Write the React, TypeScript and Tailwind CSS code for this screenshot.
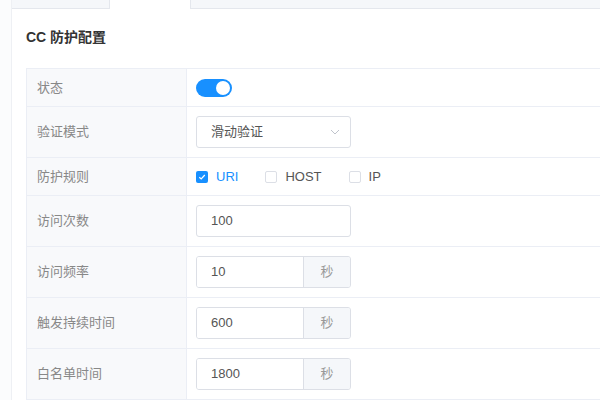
import React from "react";

const font = { fontFamily: '"Liberation Sans", "Noto Sans CJK SC", sans-serif' };

const Label = ({ children, tall }: { children: React.ReactNode; tall?: boolean }) => (
  <div
    className={`w-[160px] shrink-0 bg-[#f8f9fb] border-r border-[#ebeef5] flex items-center pl-[10px] text-[13px] text-[#888] ${
      tall ? "h-[50px]" : "h-[37px]"
    }`}
  >
    {children}
  </div>
);

const Row = ({ label, tall, children }: { label: string; tall?: boolean; children: React.ReactNode }) => (
  <div className="flex border-b border-[#ebeef5] shrink-0">
    <Label tall={tall}>{label}</Label>
    <div className="flex-1 flex items-center pl-[9px]">{children}</div>
  </div>
);

const Checkbox = ({ checked, label }: { checked?: boolean; label: string }) => (
  <div className="flex items-center mr-[27px]">
    {checked ? (
      <span className="w-[12px] h-[12px] rounded-[2px] bg-[#1890ff] flex items-center justify-center">
        <svg width="8" height="8" viewBox="0 0 8 8">
          <path d="M1.3 4.2 L3.2 6 L6.8 2" fill="none" stroke="white" strokeWidth="1.2" />
        </svg>
      </span>
    ) : (
      <span className="w-[12px] h-[12px] rounded-[2px] border border-[#dcdfe6] bg-white" />
    )}
    <span className={`ml-[8px] text-[13px] ${checked ? "text-[#1890ff]" : "text-[#555]"}`}>{label}</span>
  </div>
);

const UnitInput = ({ value }: { value: string }) => (
  <div className="flex w-[155px] h-[32px] border border-[#dcdfe6] rounded-[3px] overflow-hidden">
    <div className="w-[106px] flex items-center pl-[14px] text-[13px] text-[#555] bg-white">{value}</div>
    <div className="flex-1 border-l border-[#dcdfe6] bg-[#f5f7fa] flex items-center justify-center text-[13px] text-[#999]">
      秒
    </div>
  </div>
);

export default function App() {
  return (
    <div className="w-[600px] h-[400px] overflow-hidden flex bg-[#fbfcfd]" style={font}>
      <div className="w-[12px] shrink-0 border-r border-[#eef0f4]" />
      <div className="flex-1 bg-white flex flex-col">
        <div className="h-[9px] flex shrink-0">
          <div className="w-[98px] bg-[#f5f7fa] border-r border-b border-[#e4e7ed]" />
          <div className="w-[80px] bg-white" />
          <div className="flex-1 bg-[#f5f7fa] border-l border-b border-[#e4e7ed]" />
        </div>
        <div className="shrink-0 pl-[14px] pt-[18px] text-[14px] font-bold text-[#333] h-[59px]">CC 防护配置</div>
        <div className="shrink-0 ml-[14px] border-t border-l border-[#ebeef5]">
          <Row label="状态">
            <div className="w-[36px] h-[18px] rounded-full bg-[#1890ff] relative">
              <span className="absolute right-[2px] top-[2px] w-[14px] h-[14px] rounded-full bg-white" />
            </div>
          </Row>
          <Row label="验证模式" tall>
            <div className="w-[155px] h-[32px] border border-[#dcdfe6] rounded-[3px] flex items-center justify-between pl-[14px] pr-[10px] text-[13px] text-[#555]">
              <span>滑动验证</span>
              <svg width="10" height="6" viewBox="0 0 10 6">
                <path d="M1 1 L5 5 L9 1" fill="none" stroke="#c0c4cc" strokeWidth="1" />
              </svg>
            </div>
          </Row>
          <Row label="防护规则">
            <Checkbox checked label="URI" />
            <Checkbox label="HOST" />
            <Checkbox label="IP" />
          </Row>
          <Row label="访问次数" tall>
            <div className="w-[155px] h-[32px] border border-[#dcdfe6] rounded-[3px] flex items-center pl-[14px] text-[13px] text-[#555]">
              100
            </div>
          </Row>
          <Row label="访问频率" tall>
            <UnitInput value="10" />
          </Row>
          <Row label="触发持续时间" tall>
            <UnitInput value="600" />
          </Row>
          <Row label="白名单时间" tall>
            <UnitInput value="1800" />
          </Row>
        </div>
      </div>
    </div>
  );
}
